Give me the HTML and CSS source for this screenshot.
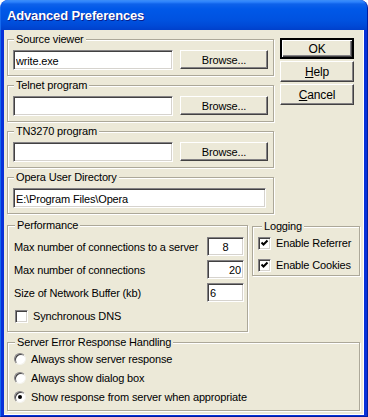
FILE: index.html
```html
<!DOCTYPE html>
<html lang="en">
<head>
    <meta charset="UTF-8">
    <title>Advanced Preferences</title>
    <link rel="stylesheet" href="styles.css">
</head>
<body>
    <div class="window">
        <div class="titlebar">
            <span class="title">Advanced Preferences</span>
        </div>

        <div class="client">
            <div class="top">
                <div class="paths">
                    <fieldset class="group">
                        <legend>Source viewer</legend>
                        <div class="path-row">
                            <input class="field path" type="text" value="write.exe">
                            <button class="btn browse" type="button">Browse...</button>
                        </div>
                    </fieldset>

                    <fieldset class="group">
                        <legend>Telnet program</legend>
                        <div class="path-row">
                            <input class="field path" type="text" value="">
                            <button class="btn browse" type="button">Browse...</button>
                        </div>
                    </fieldset>

                    <fieldset class="group">
                        <legend>TN3270 program</legend>
                        <div class="path-row">
                            <input class="field path" type="text" value="">
                            <button class="btn browse" type="button">Browse...</button>
                        </div>
                    </fieldset>

                    <fieldset class="group">
                        <legend>Opera User Directory</legend>
                        <input class="field dir" type="text" value="E:\Program Files\Opera">
                    </fieldset>
                </div>

                <div class="buttons">
                    <button class="btn default" type="button">OK</button>
                    <button class="btn" type="button"><u>H</u>elp</button>
                    <button class="btn" type="button"><u>C</u>ancel</button>
                </div>
            </div>

            <div class="middle">
                <fieldset class="group perf">
                    <legend>Performance</legend>
                    <div class="num-row">
                        <span>Max number of connections to a server</span>
                        <input class="field num center" type="text" value="8">
                    </div>
                    <div class="num-row">
                        <span>Max number of connections</span>
                        <input class="field num right" type="text" value="20">
                    </div>
                    <div class="num-row">
                        <span>Size of Network Buffer (kb)</span>
                        <input class="field num" type="text" value="6">
                    </div>
                    <label class="check-row">
                        <span class="checkbox"></span>
                        <span>Synchronous DNS</span>
                    </label>
                </fieldset>

                <fieldset class="group logging">
                    <legend>Logging</legend>
                    <label class="check-row">
                        <span class="checkbox">
                            <svg viewBox="0 0 9 9" width="9" height="9"><polyline points="1.5,3.5 3.5,5.5 7.5,1.5" fill="none" stroke="#000" stroke-width="2"/></svg>
                        </span>
                        <span class="clip">Enable Referrer</span>
                    </label>
                    <label class="check-row">
                        <span class="checkbox">
                            <svg viewBox="0 0 9 9" width="9" height="9"><polyline points="1.5,3.5 3.5,5.5 7.5,1.5" fill="none" stroke="#000" stroke-width="2"/></svg>
                        </span>
                        <span class="clip">Enable Cookies</span>
                    </label>
                </fieldset>
            </div>

            <fieldset class="group server">
                <legend>Server Error Response Handling</legend>
                <label class="radio-row">
                    <span class="radio"></span>
                    <span>Always show server response</span>
                </label>
                <label class="radio-row">
                    <span class="radio"></span>
                    <span>Always show dialog box</span>
                </label>
                <label class="radio-row">
                    <span class="radio checked"></span>
                    <span>Show response from server when appropriate</span>
                </label>
            </fieldset>
        </div>
    </div>
</body>
</html>
```

FILE: styles.css
```css
html, body {
    margin: 0;
    background: #fff;
}

body {
    font-family: "Liberation Sans", Arial, sans-serif;
    font-size: 11px;
    letter-spacing: -0.16px;
    color: #000;
}

.window {
    width: 368px;
    height: 417px;
    box-sizing: border-box;
    display: flex;
    flex-direction: column;
    background: #0831d9;
    border-left: 1px solid #166aee;
    border-right: 1px solid #001ea0;
    border-bottom: 1px solid #001ea0;
    border-radius: 8px 8px 0 0;
    overflow: hidden;
}

/* XP blue caption */
.titlebar {
    height: 30px;
    flex: none;
    display: flex;
    align-items: center;
    padding-left: 6px;
    background: linear-gradient(#3d8ef8 0, #2c82fc 2px, #0e62ea 4px, #0058e8 9px, #0052e0 20px, #0049d6 26px, #0040cb 30px);
}

.title {
    color: #fff;
    font-weight: bold;
    font-size: 13px;
    letter-spacing: -0.15px;
    text-shadow: 1px 1px 0 #0a1e8a;
    padding-top: 1px;
}

.client {
    flex: 1;
    margin: 0 3px 3px;
    background: #ece9d8;
    padding: 3px 3px 0 3px;
    border-right: 1px solid #fff;
    border-bottom: 1px solid #fff;
}

/* group boxes */
.group {
    margin: 0 0 3px;
    padding: 4px 5px 5px;
    border: 1px solid #aca899;
    box-shadow: inset 1px 1px 0 #fff, 1px 1px 0 #fff;
    min-inline-size: 0;
}

.group legend {
    padding: 0 2px;
    margin-left: 1px;
    line-height: 13px;
    background: #ece9d8;
}

.top {
    display: flex;
}

.paths {
    width: 267px;
}

.path-row {
    display: flex;
    gap: 7px;
}

/* sunken edit box */
.field {
    box-sizing: border-box;
    height: 20px;
    margin: 0;
    padding: 1px 2px 0;
    font: inherit;
    letter-spacing: inherit;
    color: #000;
    background: #fff;
    border: 1px solid;
    border-color: #848284 #fff #fff #848284;
    box-shadow: inset 1px 1px 0 #424142, inset -1px -1px 0 #d6d3ce;
    outline: none;
}

.path {
    width: 160px;
}

.dir {
    width: 253px;
}

/* raised push button */
.btn {
    box-sizing: border-box;
    height: 19px;
    margin: 0;
    padding: 0;
    font: inherit;
    letter-spacing: inherit;
    color: #000;
    background: #ece9d8;
    border: 1px solid;
    border-color: #fff #424142 #424142 #fff;
    box-shadow: inset -1px -1px 0 #848284;
}

.browse {
    width: 88px;
}

.buttons {
    margin-left: 6px;
    padding-top: 5px;
    display: flex;
    flex-direction: column;
    gap: 2px;
}

.buttons .btn {
    width: 74px;
    height: 21px;
    font-size: 12px;
}

.buttons .default {
    border-width: 2px;
    border-color: #000;
    box-shadow: inset 1px 1px 0 #fff, inset -1px -1px 0 #424142, inset -2px -2px 0 #848284;
}

.middle {
    display: flex;
    align-items: flex-start;
    gap: 4px;
    margin-top: 2px;
}

.perf {
    width: 241px;
    box-sizing: border-box;
    padding: 5px 3px 5px 6px;
}

.num-row {
    display: flex;
    justify-content: space-between;
    align-items: center;
    height: 19px;
    margin-bottom: 4px;
}

.num {
    width: 37px;
    height: 19px;
}

.num.center {
    text-align: center;
}

.num.right {
    text-align: right;
}

.check-row,
.radio-row {
    display: flex;
    align-items: center;
    gap: 5px;
}

.perf .check-row {
    height: 20px;
    margin-left: 1px;
}

.checkbox {
    box-sizing: border-box;
    width: 13px;
    height: 13px;
    flex: none;
    display: flex;
    align-items: center;
    justify-content: center;
    background: #fff;
    border: 1px solid;
    border-color: #848284 #fff #fff #848284;
    box-shadow: inset 1px 1px 0 #424142, inset -1px -1px 0 #d6d3ce;
}

.logging {
    width: 108px;
    box-sizing: border-box;
    padding: 0 0 0 5px;
    margin-top: 1px;
}

.logging legend {
    margin-left: 4px;
}

.logging .check-row {
    height: 20px;
    margin-bottom: 2px;
}

.logging .check-row:last-child {
    margin-bottom: 0;
}

.clip {
    width: 78px;
    overflow: hidden;
    white-space: nowrap;
}

.server {
    margin-top: 1px;
    padding: 0 5px 4px 6px;
}

.radio-row {
    height: 19px;
}

.radio {
    box-sizing: border-box;
    width: 12px;
    height: 12px;
    flex: none;
    border-radius: 50%;
    background: #fff;
    border: 1px solid;
    border-color: #848284 #f4f3ee #f4f3ee #848284;
    box-shadow: inset 1px 1px 0 #424142;
    display: flex;
    align-items: center;
    justify-content: center;
}

.radio.checked::after {
    content: "";
    width: 4px;
    height: 4px;
    border-radius: 50%;
    background: #000;
}
```
